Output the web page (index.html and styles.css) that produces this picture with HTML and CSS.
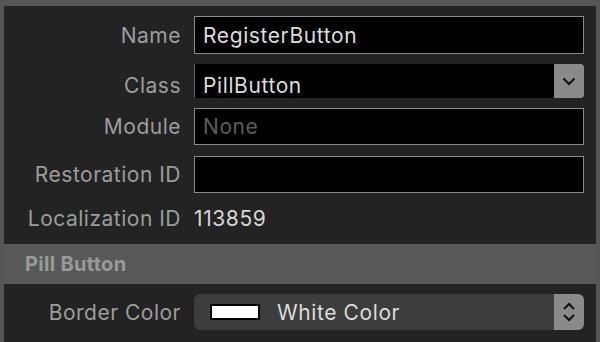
FILE: index.html
```html
<!DOCTYPE html>
<html lang="en">
<head>
  <meta charset="UTF-8">
  <title>Identity Inspector</title>
  <link rel="stylesheet" href="styles.css">
</head>
<body>
  <div class="inspector">
    <!-- Identity -->
    <div class="section">
      <div class="row row-name">
        <label class="label">Name</label>
        <div class="field">RegisterButton</div>
      </div>
      <div class="row row-class">
        <label class="label">Class</label>
        <div class="combo">
          <span class="combo-text">PillButton</span>
          <span class="combo-btn">
            <svg width="14" height="9" viewBox="0 0 14 9"><path d="M1.5 1.5 L7 7 L12.5 1.5" fill="none" stroke="#111" stroke-width="2"/></svg>
          </span>
        </div>
      </div>
      <div class="row row-module">
        <label class="label">Module</label>
        <div class="field placeholder">None</div>
      </div>
      <div class="row row-restoration">
        <label class="label">Restoration ID</label>
        <div class="field"></div>
      </div>
      <div class="row row-localization">
        <label class="label">Localization ID</label>
        <div class="value">113859</div>
      </div>
    </div>

    <!-- Pill Button -->
    <div class="section-header">Pill Button</div>
    <div class="section section-attrs">
      <div class="row row-border">
        <label class="label">Border Color</label>
        <div class="popup">
          <span class="swatch"></span>
          <span class="popup-text">White Color</span>
          <span class="stepper">
            <svg width="14" height="22" viewBox="0 0 14 22"><path d="M2 8 L7 3 L12 8 M2 14 L7 19 L12 14" fill="none" stroke="#111" stroke-width="2"/></svg>
          </span>
        </div>
      </div>
    </div>
  </div>
</body>
</html>
```

FILE: styles.css
```css
body {
  margin: 0;
  background-color: #575757;
  font-family: 'Inter', 'Roboto', sans-serif;
  height: 342px;
  overflow: hidden;
}

.inspector {
  margin: 6px 4px 0 4px;
  background-color: #232323;
  height: 336px;
}

.section {
  padding: 10px 12px 0 0;
}

.row {
  display: grid;
  grid-template-columns: 177px 1fr;
  column-gap: 13px;
  align-items: center;
}

.label {
  text-align: right;
  font-size: 21px;
  letter-spacing: 0.5px;
  color: #9d9d9d;
}

.row-name { height: 38px; margin-bottom: 10px; }
.row-class { height: 34px; margin-bottom: 10px; }
.row-module { height: 37px; margin-bottom: 11px; }
.row-restoration { height: 37px; }
.row-localization { height: 51px; }

.row-class .label { padding-top: 9px; }

.field {
  height: 100%;
  box-sizing: border-box;
  background-color: #000;
  border: 1px solid #8a8a8a;
  padding: 0 8px;
  display: flex;
  align-items: center;
  font-size: 21px;
  letter-spacing: 0.6px;
  color: #dcdcdc;
}

.field.placeholder {
  color: #5c5c5c;
}

.combo {
  height: 100%;
  box-sizing: border-box;
  background-color: #000;
  border-left: 1px solid #5a5a5a;
  display: flex;
  align-items: center;
}

.combo-text {
  flex: 1;
  padding: 8px 0 0 8px;
  font-size: 21px;
  letter-spacing: 0.6px;
  color: #dcdcdc;
}

.combo-btn {
  width: 30px;
  height: 100%;
  background-color: #8a8a8a;
  border-radius: 0 3px 3px 0;
  display: flex;
  align-items: center;
  justify-content: center;
}

.value {
  font-size: 21px;
  letter-spacing: 0.6px;
  color: #d6d6d6;
}

.section-header {
  margin-top: 0;
  height: 40px;
  background-color: #585858;
  padding-left: 21px;
  display: flex;
  align-items: center;
  font-size: 20px;
  font-weight: bold;
  letter-spacing: 0.3px;
  color: #9a9a9a;
}

.row-border { height: 36px; }

.popup {
  height: 100%;
  background-color: #3d3d3d;
  border-radius: 6px;
  display: flex;
  align-items: center;
  overflow: hidden;
}

.swatch {
  width: 46px;
  height: 12px;
  margin-left: 16px;
  background-color: #fff;
  border: 2px solid #000;
}

.popup-text {
  flex: 1;
  padding-left: 17px;
  font-size: 21px;
  letter-spacing: 0.6px;
  color: #dcdcdc;
}

.stepper {
  width: 30px;
  height: 100%;
  background-color: #8a8a8a;
  display: flex;
  align-items: center;
  justify-content: center;
}
```
